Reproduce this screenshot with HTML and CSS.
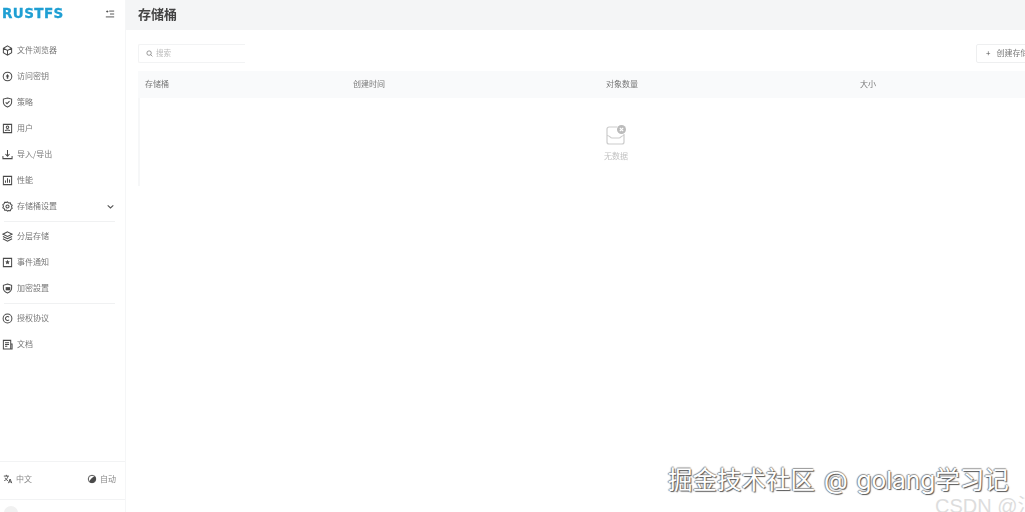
FILE: index.html
```html
<!DOCTYPE html>
<html lang="zh">
<head>
<meta charset="utf-8">
<title>存储桶</title>
<link rel="stylesheet" href="styles.css">
</head>
<body>
<div class="app">
  <aside class="sidebar">
    <div class="brand">
      <span class="logo">RUSTFS</span>
      <svg class="ico collapse" viewBox="0 0 12 12"><path d="M5 2.500h6M6 6h5M1 9.500h10M1.500 3h2.500M2.700 1.800v2.400"/></svg>
    </div>
    <nav class="menu">
      <a class="item"><svg class="ico" viewBox="0 0 12 12"><path d="M6 1l4.500 2.500v5L6 11 1.500 8.500v-5zM1.500 3.500L6 6l4.500-2.500M6 6v5"/></svg><span>文件浏览器</span></a>
      <a class="item"><svg class="ico" viewBox="0 0 12 12"><circle cx="6" cy="6" r="4.700"/><path class="fill" d="M6 3.200L8 6H6.800v2.500H5.200V6H4z"/></svg><span>访问密钥</span></a>
      <a class="item"><svg class="ico" viewBox="0 0 12 12"><path d="M6 1l4.500 1.200v3.600c0 2.500-2 4.200-4.500 5.200-2.500-1-4.500-2.700-4.500-5.200V2.200zM4 5.800l1.500 1.500L8.200 4.600"/></svg><span>策略</span></a>
      <a class="item"><svg class="ico" viewBox="0 0 12 12"><path d="M1.500 1.500h9v9h-9zM3.500 8.500c.4-1.300 4.600-1.300 5 0"/><circle cx="6" cy="4.700" r="1.400"/></svg><span>用户</span></a>
      <a class="item"><svg class="ico" viewBox="0 0 12 12"><path d="M1 7.500v3h10v-3M6 1v6.500M3.800 5.500L6 8l2.200-2.500"/></svg><span>导入/导出</span></a>
      <a class="item"><svg class="ico" viewBox="0 0 12 12"><path d="M1.500 1.500h9v9h-9zM3.800 8.500V6M6 8.500V3.500M8.200 8.500V5"/></svg><span>性能</span></a>
      <a class="item"><svg class="ico" viewBox="0 0 12 12"><path d="M6 1l1.300 1.200 1.800-.2.500 1.700 1.500 1-.7 1.700.7 1.600-1.500 1-.5 1.700-1.800-.2L6 11 4.700 9.800l-1.800.2-.5-1.700-1.500-1 .7-1.600-.7-1.700 1.500-1 .5-1.700 1.800.2z"/><circle cx="6" cy="6" r="1.700"/></svg><span>存储桶设置</span><svg class="chev" viewBox="0 0 8 8"><path d="M1.500 3l2.500 2.300L6.500 3"/></svg></a>
      <hr class="rule">
      <a class="item"><svg class="ico" viewBox="0 0 12 12"><path d="M6 1l5 2.500L6 6 1 3.500zM1 6l5 2.500L11 6M1 8.500L6 11l5-2.500"/></svg><span>分层存储</span></a>
      <a class="item"><svg class="ico" viewBox="0 0 12 12"><path d="M1.500 1.500h9v9h-9z"/><path class="fill" d="M6 3l.8 1.700 1.800.2-1.300 1.200.3 1.800L6 7l-1.600.9.300-1.800L3.400 4.900l1.800-.2z"/></svg><span>事件通知</span></a>
      <a class="item"><svg class="ico" viewBox="0 0 12 12"><path d="M6 1l4.500 1.500v3.300c0 2.500-2 4.200-4.500 5.200-2.500-1-4.500-2.700-4.500-5.200V2.500z"/><path class="fill" d="M4 4.500h5v3.500H4z"/></svg><span>加密設置</span></a>
      <hr class="rule">
      <a class="item"><svg class="ico" viewBox="0 0 12 12"><circle cx="6" cy="6" r="4.800"/><path d="M7.700 4.600a2.200 2.200 0 1 0 0 2.800"/></svg><span>授权协议</span></a>
      <a class="item"><svg class="ico" viewBox="0 0 12 12"><path d="M1.500 1.500h8v9.500h-8zM3.300 4h4.400M3.300 6h4.400M3.300 8h2.500M9.500 5.500h1.500v5.500h-1.500"/></svg><span>文档</span></a>
    </nav>
    <div class="foot">
      <span class="foot-cell"><svg class="ico small" viewBox="0 0 12 12"><path d="M1 2.500h6M4 1v1.500M6 2.500C5.500 5 4 7 1.500 8M2.500 4.500C3 6 4.500 7.500 6 8M6.500 11l2-5 2 5M7.300 9.500h2.500"/></svg>中文</span>
      <span class="foot-cell"><svg class="ico small" viewBox="0 0 12 12"><circle cx="6" cy="6" r="4.500"/><path class="fill" d="M9.200 2.800A4.500 4.500 0 0 1 2.800 9.200c1-2.800 3.400-5.200 6.400-6.400z"/></svg>自动</span>
    </div>
    <div class="user"><span class="avatar"></span></div>
  </aside>
  <main class="main">
    <header class="top"><h1>存储桶</h1></header>
    <section class="content">
      <div class="bar">
        <label class="search"><svg class="ico tiny" viewBox="0 0 12 12"><circle cx="5.300" cy="5.300" r="3.800"/><path d="M8 8l3 3"/></svg><span>搜索</span></label>
        <button class="create"><span class="plus">+</span>创建存储桶</button>
      </div>
      <div class="thead">
        <span class="c1">存储桶</span><span class="c2">创建时间</span><span class="c3">对象数量</span><span class="c4">大小</span>
      </div>
      <div class="tbody">
        <div class="empty">
          <svg class="empty-ico" viewBox="0 0 20 20"><path d="M11 2H3a2 2 0 0 0-2 2v13a2 2 0 0 0 2 2h13a2 2 0 0 0 2-2V9"/><path d="M1 10.500c3 0 3 2.500 5 2.500h7c2 0 2-2.500 5-2.500"/><circle class="x-bg" cx="15.500" cy="4.500" r="4.500"/><path class="x" d="M13.800 2.800l3.400 3.400M17.200 2.800l-3.400 3.400"/></svg>
          <span>无数据</span>
        </div>
      </div>
    </section>
  </main>
</div>
<div class="mark">掘金技术社区 @ golang学习记</div>
<div class="mark2">CSDN @江</div>
</body>
</html>
```

FILE: styles.css
```css
* { box-sizing: border-box; }
html, body { margin: 0; height: 100%; overflow: hidden; background: #fff; }
body { font-family: "Noto Sans CJK SC", "Liberation Sans", sans-serif; color: #555; position: relative; }
.app { display: flex; height: 512px; width: 1025px; overflow: hidden; }

.sidebar { width: 126px; flex: none; display: flex; flex-direction: column; border-right: 1px solid #f5f6f7; filter: blur(.5px); }
.brand { height: 27px; display: flex; align-items: center; justify-content: space-between; padding: 0 10px 0 2px; }
.logo { font: 700 13.500px/1 "DejaVu Sans", "Liberation Sans", sans-serif; color: #1f9fd3; letter-spacing: .4px; -webkit-text-stroke: .3px #1f9fd3; }
.ico { width: 11px; height: 11px; flex: none; fill: none; stroke: #4a4a4a; stroke-width: 1.100; }
.ico .fill { fill: #4a4a4a; stroke: none; }
.collapse { width: 10px; height: 10px; }
.menu { padding-top: 10px; flex: 1; display: flex; flex-direction: column; }
.item { height: 26px; flex: none; display: flex; align-items: center; gap: 4px; padding: 0 10px 0 2px; font-size: 8px; line-height: 1; color: #777; }
.item span { flex: 1; }
.chev { width: 9px; height: 9px; fill: none; stroke: #555; stroke-width: 1; }
.rule { border: 0; border-top: 1px solid #f0f1f2; margin: 1.500px 10px 1.500px 4px; height: 1px; flex: none; }
.foot { height: 39px; border-top: 1px solid #f2f3f4; border-bottom: 1px solid #f2f3f4; display: flex; align-items: center; justify-content: space-between; padding: 0 9px 3px 3px; font-size: 8px; line-height: 1; color: #888; flex: none; }
.foot-cell { display: flex; align-items: center; gap: 3px; }
.small { width: 10px; height: 10px; }
.user { height: 12px; padding: 6px 0 0 4px; flex: none; overflow: hidden; }
.avatar { display: block; width: 14px; height: 14px; border-radius: 50%; background: #f1f1f1; }

.main { flex: 1; min-width: 0; display: flex; flex-direction: column; }
.top { height: 30px; background: #f4f5f6; display: flex; align-items: center; padding: 0 0 3px 12px; flex: none; }
.top h1 { margin: 0; font-size: 13px; line-height: 1; font-weight: 700; color: #444; filter: blur(.4px); }
.content { padding: 14px 0 0 12px; width: 968px; flex: none; filter: blur(.5px); }
.bar { display: flex; justify-content: space-between; height: 19px; }
.search { width: 107px; display: flex; align-items: center; gap: 3px; padding: 0 0 1px 7px; border: 1px solid #f2f3f4; border-right: 0; border-radius: 2px 0 0 2px; font-size: 7.500px; line-height: 1; color: #bbb; }
.tiny { width: 7px; height: 7px; stroke: #666; }
.create { width: 70px; flex: none; margin-right: 48px; background: #fff; border: 1px solid #eeeff0; border-radius: 2px; display: flex; align-items: center; padding: 0 0 1px 9px; font: 8px/1 "Noto Sans CJK SC", sans-serif; color: #777; white-space: nowrap; overflow: hidden; }
.plus { margin-right: 6px; color: #555; }
.thead { margin-top: 8px; height: 27px; background: #f9fafb; display: flex; align-items: center; padding-bottom: 2px; font-size: 8px; line-height: 1; color: #777; }
.thead span { flex: none; }
.c1 { width: 208px; padding-left: 7px; }
.c2 { width: 253px; padding-left: 7px; }
.c3 { width: 254px; padding-left: 7px; }
.c4 { padding-left: 7px; }
.tbody { height: 88px; border-left: 2px solid #f6f7f8; }
.empty { margin-left: -2px; padding-top: 27px; display: flex; flex-direction: column; align-items: center; gap: 6px; font-size: 8px; line-height: 1.200; color: #c2c2c2; }
.empty-ico { width: 20px; height: 20px; fill: none; stroke: #ccc; stroke-width: 1.200; }
.x-bg { fill: #bbb; stroke: none; }
.x { stroke: #fff; stroke-width: 1.200; }

.mark { position: absolute; left: 668px; top: 464px; font-size: 24.500px; line-height: 32px; word-spacing: 2px; color: #fff; white-space: nowrap; text-shadow: 1px 1px 1px #555, -1px 0 1px #888, 0 -1px 1px #999; font-family: "Inter", "Noto Sans CJK SC", sans-serif; }
.mark2 { position: absolute; left: 935px; top: 495px; font: 20px/22px "Liberation Sans", "Noto Sans CJK SC", sans-serif; color: #ddd; white-space: nowrap; }
```
